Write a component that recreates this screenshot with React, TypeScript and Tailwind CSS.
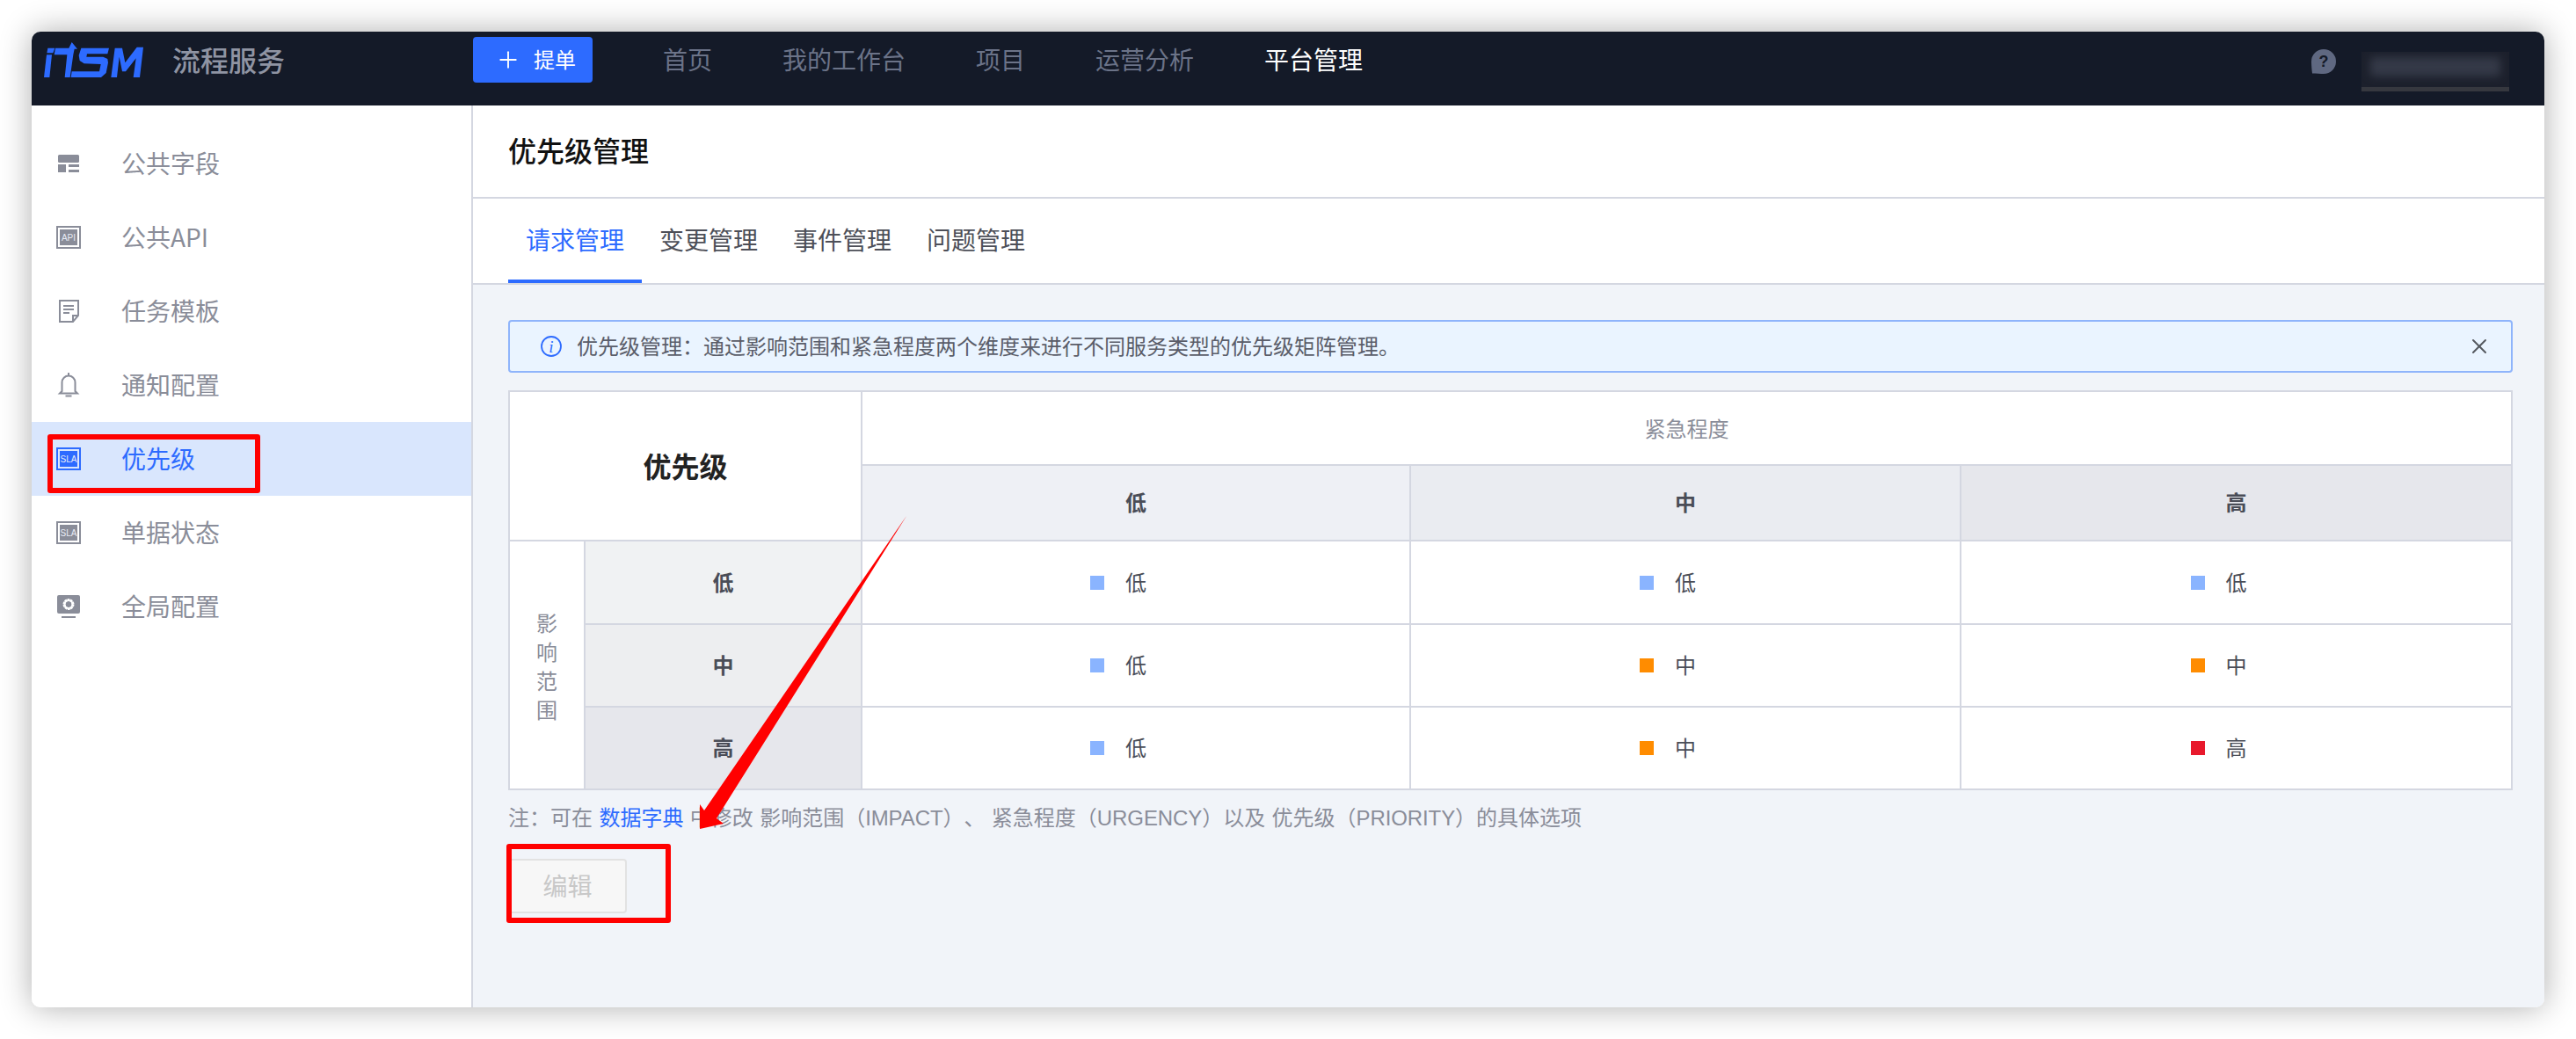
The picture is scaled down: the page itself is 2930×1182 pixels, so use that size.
import React from 'react';
import { Plus, X } from 'lucide-react';

const GRAY = '#8a8d99';

const BlockIcon = () => (
  <svg width="28" height="28" viewBox="0 0 28 28" fill={GRAY}>
    <rect x="2" y="4" width="24" height="9" rx="1.5" />
    <rect x="2" y="15" width="9" height="9" />
    <rect x="14" y="15" width="12" height="3" />
    <rect x="14" y="21" width="12" height="3" />
  </svg>
);

const BoxLabelIcon = ({ label, color }: { label: string; color: string }) => (
  <svg width="28" height="26" viewBox="0 0 28 26">
    <rect x="1" y="1" width="26" height="24" fill="none" stroke={color} strokeWidth="2" />
    <rect x="4" y="4" width="20" height="18" fill={color} />
    <text x="14" y="17" textAnchor="middle" fontSize="10" fontFamily="Liberation Sans" fill="#e8ebf5">
      {label}
    </text>
  </svg>
);

const DocIcon = () => (
  <svg width="28" height="28" viewBox="0 0 28 28" fill="none" stroke={GRAY} strokeWidth="2">
    <path d="M4 2h21v17l-6 7H4z" />
    <path d="M25 19h-6v7" />
    <path d="M8 8h12M8 12h12M8 16h7" />
  </svg>
);

const BellIcon = () => (
  <svg width="28" height="30" viewBox="0 0 28 30" fill="none" stroke={GRAY} strokeWidth="2">
    <path d="M14 1v3" />
    <path d="M6.500 22V12a7.500 7.500 0 0 1 15 0v10l2.500 2.500H4z" />
    <path d="M10.500 27.500h7" />
  </svg>
);

const GearBoxIcon = () => (
  <svg width="28" height="26" viewBox="0 0 28 26">
    <rect x="1" y="0" width="26" height="21" rx="2" fill={GRAY} />
    <circle cx="14" cy="10.500" r="5" fill="none" stroke="#fff" strokeWidth="3" strokeDasharray="2.400 0.700" />
    <circle cx="14" cy="10.500" r="4.500" fill="none" stroke="#fff" strokeWidth="2" />
    <rect x="6" y="24" width="16" height="2" fill={GRAY} />
  </svg>
);

const Logo = () => (
  <svg width="113" height="40" viewBox="33 25 339 120" fill="#2d6bff">
    <polygon points="46,45 70,45 64,62 43,62" />
    <polygon points="42,68 60,68 52,145 33,145" />
    <polygon points="72,45 118,45 128,25 147,48 137,48 133,68 122,145 104,145 112,68 68,68" />
    <polygon points="160,45 255,45 250,65 180,65 178,75 235,75 250,82 252,95 245,130 228,145 125,145 128,125 222,125 227,100 170,98 155,88 152,70" />
    <polygon points="262,145 275,45 300,45 310,95 350,42 372,42 360,145 338,145 347,80 312,125 300,125 290,75 282,145" />
  </svg>
);

const HelpIcon = () => (
  <svg width="28" height="28" viewBox="0 0 28 28">
    <path d="M14 0a14 14 0 0 1 0 28c-4 0-8-.3-13-.5C.5 24 0 18 0 14A14 14 0 0 1 14 0z" fill="#5f6881" />
    <text x="14" y="20" textAnchor="middle" fontSize="18" fontWeight="700" fontFamily="Liberation Sans" fill="#141a28">
      ?
    </text>
  </svg>
);

const InfoIcon = () => (
  <svg width="24" height="24" viewBox="0 0 24 24">
    <circle cx="12" cy="12" r="11" fill="none" stroke="#2d6bff" strokeWidth="1.800" />
    <text x="12" y="18.500" textAnchor="middle" fontSize="19" fontStyle="italic" fontFamily="Liberation Serif" fill="#2d6bff">
      i
    </text>
  </svg>
);

const Latin = ({ children }: { children: React.ReactNode }) => (
  <span className="font-['Liberation_Sans'] tracking-[-0.1px]">{children}</span>
);

const sideItems: { label: string; icon: React.ReactNode; active?: boolean }[] = [
  { label: '公共字段', icon: <BlockIcon /> },
  { label: '公共API', icon: <BoxLabelIcon label="API" color={GRAY} /> },
  { label: '任务模板', icon: <DocIcon /> },
  { label: '通知配置', icon: <BellIcon /> },
  { label: '优先级', icon: <BoxLabelIcon label="SLA" color="#2d6bff" />, active: true },
  { label: '单据状态', icon: <BoxLabelIcon label="SLA" color={GRAY} /> },
  { label: '全局配置', icon: <GearBoxIcon /> },
];

const navItems = ['我的工作台', '项目', '运营分析'];
const tabs = ['请求管理', '变更管理', '事件管理', '问题管理'];

type Level = '低' | '中' | '高';

const levelColor: Record<Level, string> = {
  低: 'bg-[#8ab4ff]',
  中: 'bg-[#ff8c00]',
  高: 'bg-[#e8192c]',
};

const rows: { label: Level; bg: string; h: string; cells: Level[] }[] = [
  { label: '低', bg: 'bg-[#f0f2f3]', h: 'h-[95px]', cells: ['低', '低', '低'] },
  { label: '中', bg: 'bg-[#edeef0]', h: 'h-[94px]', cells: ['低', '中', '中'] },
  { label: '高', bg: 'bg-[#e6e7ec]', h: 'h-[94px]', cells: ['低', '中', '高'] },
];

const line = 'border-2 border-[#d4d7e1]';

const PriorityTable = () => (
  <table className="w-full table-fixed border-collapse bg-white">
    <colgroup>
      <col className="w-[86px]" />
      <col className="w-[315px]" />
      <col className="w-[624px]" />
      <col className="w-[626px]" />
      <col />
    </colgroup>
    <tbody>
      <tr className="h-[84px]">
        <td colSpan={2} rowSpan={2} className={`${line} pb-[3px] text-center text-[32px] font-bold text-[#222]`}>
          优先级
        </td>
        <td colSpan={3} className={`${line} text-center text-[24px] text-[#8a8d99]`}>
          紧急程度
        </td>
      </tr>
      <tr className="h-[86px]">
        <td className={`${line} bg-[#eef0f5] pb-[2px] text-center text-[24px] font-bold text-[#4a4d57]`}>低</td>
        <td className={`${line} bg-[#eaecf1] pb-[2px] text-center text-[24px] font-bold text-[#4a4d57]`}>中</td>
        <td className={`${line} bg-[#e6e7ec] pb-[2px] text-center text-[24px] font-bold text-[#4a4d57]`}>高</td>
      </tr>
      {rows.map((row, i) => (
        <tr key={row.label} className={row.h}>
          {i === 0 && (
            <td rowSpan={3} className={line}>
              <div className="flex flex-col items-center text-[24px] leading-[33px] text-[#8a8d99]">
                <span>影</span>
                <span>响</span>
                <span>范</span>
                <span>围</span>
              </div>
            </td>
          )}
          <td className={`${line} ${row.bg} pb-[2px] text-center text-[24px] font-bold text-[#4a4d57]`}>{row.label}</td>
          {row.cells.map((cell, j) => (
            <td key={j} className={line}>
              <div className="flex items-center justify-center text-[24px] text-[#4a4d57]">
                <span className={`ml-[-40px] mr-[24px] h-[16px] w-[16px] ${levelColor[cell]}`} />
                <span className="pb-[2px]">{cell}</span>
              </div>
            </td>
          ))}
        </tr>
      ))}
    </tbody>
  </table>
);

export default function App() {
  return (
    <div
      className="relative h-[1182px] w-[2930px] overflow-hidden bg-white p-[36px]"
      style={{ fontFamily: '"Noto Sans CJK SC", sans-serif' }}
    >
      <div className="flex h-full flex-col overflow-hidden rounded-[10px] shadow-[0_0_36px_rgba(0,0,0,0.32)]">
        {/* Top bar */}
        <header className="flex h-[84px] shrink-0 items-start bg-[#141a28] pt-[6px] pl-[14px]">
          <div className="flex h-[52px] w-[488px] items-center">
            <Logo />
            <span className="ml-[33px] pb-[2px] text-[32px] font-medium text-[#8f94a3]">流程服务</span>
          </div>
          <button className="flex h-[52px] w-[136px] items-center gap-[14px] rounded-[4px] bg-[#2d6bff] pl-[25px] text-[24px] text-white">
            <Plus size={30} strokeWidth={1.5} />
            <span className="pb-[2px]">提单</span>
          </button>
          <nav className="ml-[80px] flex h-[52px] items-center gap-[80px] pb-[3px] text-[28px] text-[#6b7388]">
            <span>首页</span>
            {navItems.map((item) => (
              <span key={item}>{item}</span>
            ))}
            <span className="text-white">平台管理</span>
          </nav>
          <div className="ml-auto flex items-start gap-[29px] pr-[40px]">
            <div className="mt-[14px]">
              <HelpIcon />
            </div>
            <div className="mt-[17px] flex h-[45px] w-[168px] flex-col overflow-hidden bg-[#1c202c]">
              <div className="flex-1 px-[10px] py-[6px]">
                <div className="h-[22px] rounded bg-[#343947] blur-[5px]" />
              </div>
              <div className="h-[5px] bg-[#36383f]" />
            </div>
          </div>
        </header>

        <div className="flex min-h-0 flex-1">
          {/* Sidebar */}
          <aside className="w-[502px] shrink-0 border-r-2 border-[#d4d7e1] bg-white pt-[24px]">
            {sideItems.map((item) => (
              <div
                key={item.label}
                className={`flex h-[84px] items-center pl-[28px] text-[28px] ${
                  item.active ? 'bg-[#d9e6fd] text-[#2d6bff]' : 'text-[#8a8d99]'
                }`}
              >
                <span className="flex w-[74px] shrink-0">{item.icon}</span>
                <span className="pb-[2px]">{item.label}</span>
              </div>
            ))}
          </aside>

          {/* Main */}
          <main className="flex min-w-0 flex-1 flex-col bg-[#f1f4f9]">
            <div className="flex h-[106px] shrink-0 items-center border-b-2 border-[#d4d7e1] bg-white pb-[4px] pl-[40px] text-[32px] font-medium text-[#111]">
              优先级管理
            </div>
            <div className="flex h-[98px] shrink-0 border-b-2 border-[#d4d7e1] bg-white pl-[40px]">
              {tabs.map((tab, i) => (
                <div
                  key={tab}
                  className={`flex w-[152px] items-center justify-center border-b-4 pb-[1px] text-[28px] ${
                    i === 0 ? 'border-[#2d6bff] text-[#2d6bff]' : 'border-transparent text-[#4d4f58]'
                  }`}
                >
                  {tab}
                </div>
              ))}
            </div>

            <div className="flex flex-1 flex-col pt-[40px] pr-[36px] pl-[40px]">
              <div className="flex h-[60px] shrink-0 items-center rounded-[4px] border-2 border-[#8fb4fb] bg-[#eaf4ff] pr-[22px] pl-[35px] text-[24px] text-[#5a5d69]">
                <InfoIcon />
                <span className="ml-[17px] pb-[2px]">优先级管理：通过影响范围和紧急程度两个维度来进行不同服务类型的优先级矩阵管理。</span>
                <X size={28} strokeWidth={1.7} className="ml-auto text-[#55585f]" />
              </div>

              <div className="mt-[20px]">
                <PriorityTable />
              </div>

              <p className="mt-[13px] text-[24px] leading-[34px] text-[#8a8d99] [text-spacing-trim:space-all] [word-spacing:2px]">
                注：可在 <span className="text-[#2d6bff]">数据字典</span> 中修改 影响范围（<Latin>IMPACT</Latin>）、 紧急程度（<Latin>URGENCY</Latin>）以及 优先级（<Latin>PRIORITY</Latin>）的具体选项
              </p>

              <button className="mt-[29px] h-[62px] w-[135px] rounded-[4px] border-2 border-[#e2e2e2] bg-[#f7f7f7] pb-[2px] text-[28px] text-[#c8c8c8]">
                编辑
              </button>
            </div>
          </main>
        </div>
      </div>

      {/* Red annotations drawn over the screenshot */}
      <div className="absolute top-[494px] left-[54px] h-[67px] w-[242px] rounded-[3px] border-[6px] border-[#ff0000]" />
      <div className="absolute top-[960px] left-[576px] h-[90px] w-[187px] rounded-[3px] border-[6px] border-[#ff0000]" />
      <svg className="absolute top-0 left-0" width="2930" height="1182" fill="#ff0000">
        <polygon points="1031,587 815,931 823,937 796,943 796,915 801,922" />
      </svg>
    </div>
  );
}
